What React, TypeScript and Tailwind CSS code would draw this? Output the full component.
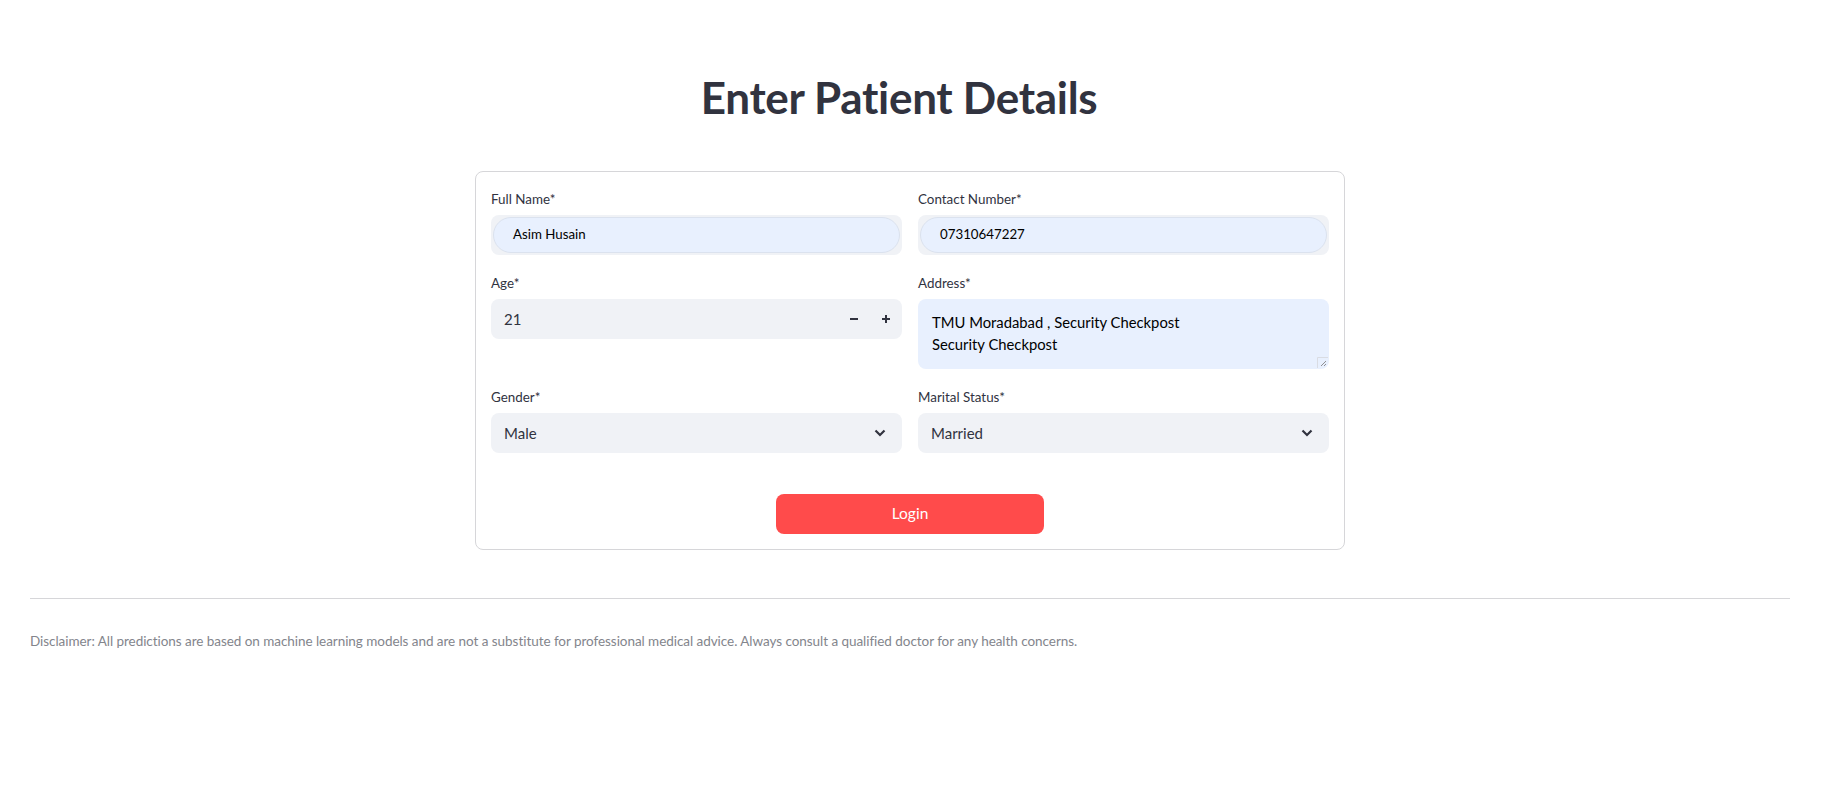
import { ReactNode } from "react";

const font = "font-['Lato','Noto_Sans',sans-serif]";

function Field({ label, children }: { label: string; children: ReactNode }) {
  return (
    <div className="flex flex-col">
      <label className="h-6 mb-1 text-[13.4px] leading-6 text-[#31333f]">{label}</label>
      {children}
    </div>
  );
}

function AutofillInput({ value }: { value: string }) {
  return (
    <div className="h-10 rounded-lg bg-[#f0f2f6] p-[2px]">
      <div className="h-9 rounded-full border border-[#dbe2ee] bg-[#e8f0fe] flex items-center pl-[19px] text-[13.3px] text-black">
        {value}
      </div>
    </div>
  );
}

function Chevron() {
  return (
    <svg width="14" height="14" viewBox="0 0 14 14" className="text-[#31333f]">
      <path d="M2.5 4.5 7 9l4.5-4.5" fill="none" stroke="currentColor" strokeWidth="2.2" />
    </svg>
  );
}

function SelectBox({ value }: { value: string }) {
  return (
    <div className="h-10 rounded-lg bg-[#f0f2f6] flex items-center justify-between pl-[13px] pr-[15px] text-[15px] text-[#31333f]">
      <span>{value}</span>
      <Chevron />
    </div>
  );
}

export default function App() {
  return (
    <div className={`min-h-screen bg-white ${font}`}>
      <div className="pl-[30px] pr-[53px]">
        {/* Title */}
        <h1 className="pt-[72px] flex justify-center">
          <span className="text-[44px] leading-[50px] font-bold text-[#31333f] tracking-[-0.3px]">
            Enter Patient Details
          </span>
          <span className="w-[22px]" />
        </h1>

        {/* Form card */}
        <div className="mx-auto mt-[49px] w-[870px] rounded-lg border border-[#d6d6d9] p-[15px]">
          <div className="grid grid-cols-2 gap-x-4 gap-y-4">
            <Field label="Full Name*">
              <AutofillInput value="Asim Husain" />
            </Field>
            <Field label="Contact Number*">
              <AutofillInput value="07310647227" />
            </Field>

            <Field label="Age*">
              <div className="h-10 rounded-lg bg-[#f0f2f6] flex items-center text-[15px] text-[#31333f]">
                <span className="flex-1 pl-[13px]">21</span>
                <span className="w-8 h-10 flex items-center justify-center">
                  <svg width="10" height="10" viewBox="0 0 10 10">
                    <path d="M1 5h8" stroke="#31333f" strokeWidth="2" />
                  </svg>
                </span>
                <span className="w-8 h-10 flex items-center justify-center">
                  <svg width="10" height="10" viewBox="0 0 10 10">
                    <path d="M1 5h8M5 1v8" stroke="#31333f" strokeWidth="2" />
                  </svg>
                </span>
              </div>
            </Field>
            <Field label="Address*">
              <div className="relative h-[70px] rounded-lg bg-[#e8f0fe] pl-[14px] pt-[12px] text-[14.8px] leading-[22px] text-black">
                <div>TMU Moradabad , Security Checkpost</div>
                <div>Security Checkpost</div>
                <svg
                  width="11"
                  height="11"
                  viewBox="0 0 11 11"
                  className="absolute right-[1px] bottom-[1px]"
                >
                  <path d="M0.5 11V0.5H11" fill="none" stroke="#d9dce3" />
                  <path d="M4 9 9 4M7 9 9 7" stroke="#777" strokeWidth="0.8" />
                </svg>
              </div>
            </Field>

            <Field label="Gender*">
              <SelectBox value="Male" />
            </Field>
            <Field label="Marital Status*">
              <SelectBox value="Married" />
            </Field>
          </div>

          <div className="mt-[41px] flex justify-center">
            <button className="w-[268px] h-10 rounded-lg bg-[#ff4b4b] text-white text-[15.5px]">Login</button>
          </div>
        </div>

        {/* Footer */}
        <hr className="mt-[48px] border-0 border-t border-[#d6d6d9]" />
        <p className="mt-[32px] text-[13.5px] leading-[21px] tracking-[-0.05px] text-[#83858c]">
          Disclaimer: All predictions are based on machine learning models and are not a substitute for professional
          medical advice. Always consult a qualified doctor for any health concerns.
        </p>
      </div>
    </div>
  );
}
